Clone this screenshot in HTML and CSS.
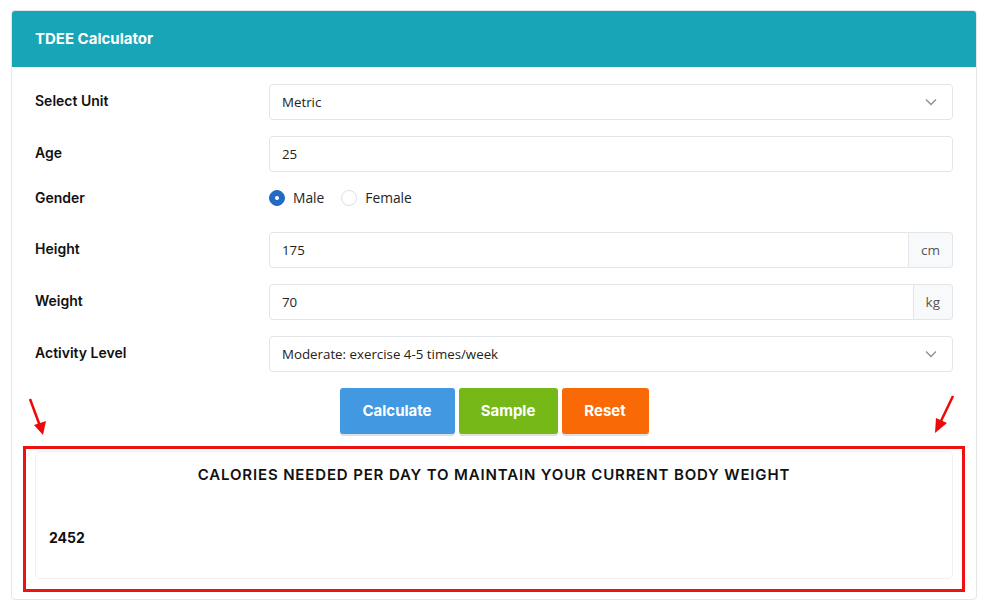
FILE: index.html
```html
<!DOCTYPE html>
<html lang="en">
<head>
    <meta charset="UTF-8">
    <meta name="viewport" content="width=device-width, initial-scale=1.0">
    <title>TDEE Calculator</title>
    <link rel="stylesheet" href="styles.css">
</head>
<body>
    <div class="card">
        <div class="card-header">TDEE Calculator</div>
        <div class="card-body">
            <div class="row">
                <label class="lbl">Select Unit</label>
                <div class="control select">Metric
                    <svg class="chev" width="12" height="8" viewBox="0 0 12 8"><path d="M1 1.5l5 5 5-5" fill="none" stroke="#8a8f95" stroke-width="1.3"/></svg>
                </div>
            </div>
            <div class="row">
                <label class="lbl">Age</label>
                <div class="control">25</div>
            </div>
            <div class="row row-radio">
                <label class="lbl">Gender</label>
                <div class="radios">
                    <span class="radio checked"></span><span class="radio-text">Male</span>
                    <span class="radio"></span><span class="radio-text">Female</span>
                </div>
            </div>
            <div class="row">
                <label class="lbl">Height</label>
                <div class="group">
                    <div class="control">175</div>
                    <span class="addon">cm</span>
                </div>
            </div>
            <div class="row">
                <label class="lbl">Weight</label>
                <div class="group">
                    <div class="control">70</div>
                    <span class="addon">kg</span>
                </div>
            </div>
            <div class="row">
                <label class="lbl">Activity Level</label>
                <div class="control select">Moderate: exercise 4-5 times/week
                    <svg class="chev" width="12" height="8" viewBox="0 0 12 8"><path d="M1 1.5l5 5 5-5" fill="none" stroke="#8a8f95" stroke-width="1.3"/></svg>
                </div>
            </div>

            <div class="buttons">
                <button class="btn btn-blue">Calculate</button>
                <button class="btn btn-green">Sample</button>
                <button class="btn btn-orange">Reset</button>
            </div>

            <div class="result">
                <h2>CALORIES NEEDED PER DAY TO MAINTAIN YOUR CURRENT BODY WEIGHT</h2>
                <p class="value">2452</p>
            </div>
        </div>
    </div>

    <!-- annotation overlay -->
    <div class="highlight"></div>
    <svg class="arrow arrow-left" width="30" height="44" viewBox="0 0 30 44">
        <line x1="3" y1="3" x2="13" y2="30" stroke="#f00808" stroke-width="2.5"/>
        <polygon points="7,29 19,25 16,39" fill="#f00808"/>
    </svg>
    <svg class="arrow arrow-right" width="30" height="44" viewBox="0 0 30 44">
        <line x1="26" y1="2" x2="14" y2="27" stroke="#f00808" stroke-width="2.5"/>
        <polygon points="9,24 20,29 8,39" fill="#f00808"/>
    </svg>
</body>
</html>
```

FILE: styles.css
```css
body {
    margin: 0;
    padding: 10px 11px 11px;
    font-family: "Open Sans", Arial, sans-serif;
    background-color: #fff;
    color: #212529;
}

.card {
    border: 1px solid #e3e6ea;
    border-radius: 4px;
    overflow: hidden;
}

.card-header {
    background-color: #18a5b8;
    color: #fff;
    height: 56px;
    display: flex;
    align-items: center;
    padding: 0 23px 2px;
    box-sizing: border-box;
    font-family: Inter, Arial, sans-serif;
    font-weight: 700;
    font-size: 15px;
}

.card-body {
    padding: 17px 23px 20px;
}

.row {
    display: grid;
    grid-template-columns: 234px 1fr;
    align-items: center;
    margin-bottom: 16px;
}

.row-radio {
    height: 20px;
    margin-bottom: 24px;
}

.lbl {
    font-family: Inter, Arial, sans-serif;
    font-weight: 600;
    font-size: 14px;
    color: #111;
    padding-bottom: 3px;
}

.control {
    box-sizing: border-box;
    height: 36px;
    border: 1px solid #e2e5e9;
    border-radius: 4px;
    display: flex;
    align-items: center;
    padding: 0 12px 1px;
    font-size: 13.3px;
    color: #222;
    background: #fff;
    flex: 1;
}

.select {
    position: relative;
}

.chev {
    position: absolute;
    right: 15px;
    top: 13px;
}

.group {
    display: flex;
}

.group .control {
    border-radius: 4px 0 0 4px;
}

.addon {
    box-sizing: border-box;
    height: 36px;
    display: flex;
    align-items: center;
    padding: 0 12px 1px;
    border: 1px solid #e2e5e9;
    border-left: none;
    border-radius: 0 4px 4px 0;
    background: #f8f9fa;
    color: #555;
    font-size: 13.5px;
}

.radios {
    display: flex;
    align-items: center;
    font-size: 13.8px;
    padding-bottom: 2px;
}

.radio {
    width: 14px;
    height: 14px;
    border: 1px solid #dcdfe3;
    border-radius: 50%;
    margin-right: 8px;
    box-sizing: content-box;
}

.radio.checked {
    border-color: #2369c6;
    background: #2369c6;
    position: relative;
}

.radio.checked::after {
    content: "";
    position: absolute;
    left: 5px;
    top: 5px;
    width: 4px;
    height: 4px;
    border-radius: 50%;
    background: #fff;
}

.radio-text {
    margin-right: 17px;
}

.buttons {
    display: flex;
    justify-content: center;
    gap: 4px;
    margin-bottom: 17px;
}

.btn {
    height: 46px;
    border: none;
    border-radius: 3px;
    color: #fff;
    font-family: Inter, Arial, sans-serif;
    font-weight: 700;
    font-size: 15px;
    padding: 0 0 2px;
    cursor: pointer;
    box-shadow: 0 2px 0 rgba(0, 0, 0, 0.12);
}

.btn-blue {
    background-color: #4299e1;
    width: 115px;
}

.btn-green {
    background-color: #75b817;
    width: 99px;
}

.btn-orange {
    background-color: #f96a07;
    width: 87px;
}

.result {
    border: 1px solid #eef0f2;
    border-radius: 5px;
    height: 126px;
    padding: 0 13px;
}

.result h2 {
    text-align: center;
    font-family: Inter, Arial, sans-serif;
    font-size: 15px;
    font-weight: 600;
    letter-spacing: 0.85px;
    color: #111;
    margin: 13px 0 0;
}

.value {
    font-family: Inter, Arial, sans-serif;
    font-weight: 700;
    font-size: 14px;
    color: #111;
    margin: 45px 0 0;
}

.highlight {
    position: absolute;
    left: 23px;
    top: 446px;
    width: 936px;
    height: 140px;
    border: 3px solid #ee1111;
}

.arrow {
    position: absolute;
}

.arrow-left {
    left: 27px;
    top: 396px;
}

.arrow-right {
    left: 927px;
    top: 394px;
}
```
